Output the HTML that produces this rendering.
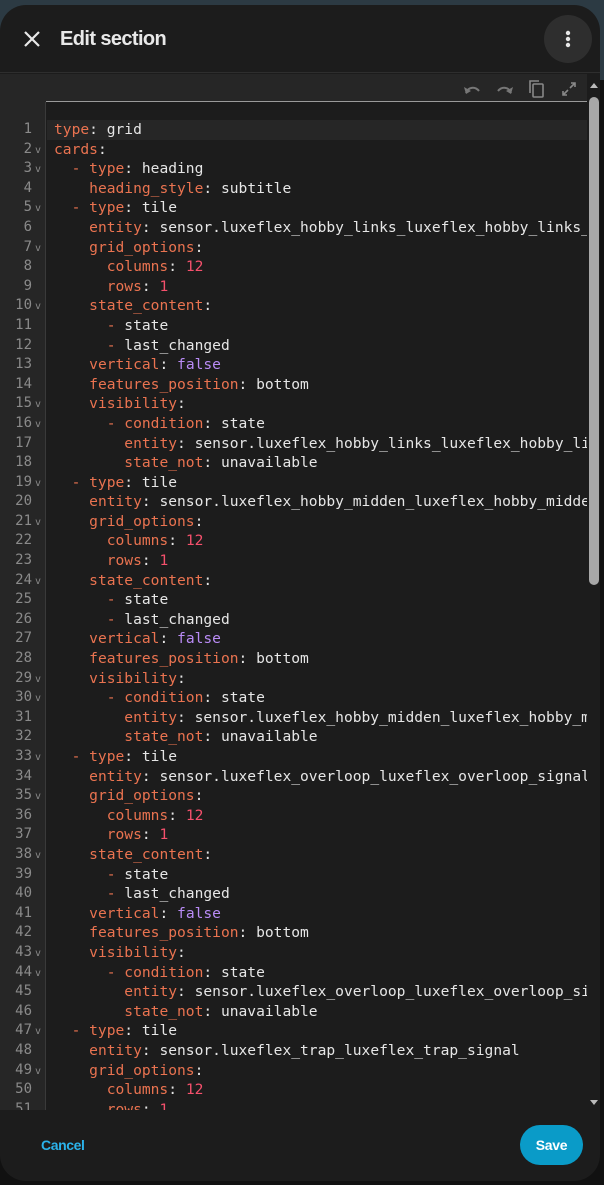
<!DOCTYPE html>
<html><head><meta charset="utf-8"><style>
*{margin:0;padding:0;box-sizing:border-box}
body{width:604px;height:1185px;background:#111;position:relative;overflow:hidden;font-family:"Liberation Sans",sans-serif}
.bgtop{position:absolute;left:0;top:0;width:604px;height:80px;background:#2c3a43}
.dlg{position:absolute;left:0;top:5px;width:600px;height:1176px;background:#1c1c1c;border-radius:26px;overflow:hidden}
.hdr{position:absolute;left:0;top:0;width:600px;height:68px;border-bottom:1px solid #2e2e2e}
.title{position:absolute;left:60px;top:23px;color:#e8e8e8;font-size:20px;font-weight:bold;letter-spacing:-0.6px}
.menu{position:absolute;left:544px;top:10px;width:48px;height:48px;border-radius:50%;background:#2e2e2e}
.ed{position:absolute;left:0;top:69px;width:600px;height:1036px;background:#1c1c1c}
.tb{position:absolute;left:0;top:0;width:587px;height:28px;background:#262626}
.gut{position:absolute;left:0;top:28px;width:46px;height:1008px;background:#262626;border-right:1px solid #3a3a3a}
.topline{position:absolute;left:46px;top:27px;width:541px;height:1px;background:#9a9a9a}
.act{position:absolute;left:47px;top:46px;width:540px;height:20px;background:#262626}
.code{position:absolute;left:0;top:46px;width:587px;height:990px;overflow:hidden;font-family:"DejaVu Sans Mono",monospace;font-size:14.6px}
.l{height:19.6px;line-height:19.6px;white-space:pre;position:relative}
.n{position:absolute;left:0;width:32px;text-align:right;color:#8a8a8a;font-size:14px}
.f{position:absolute;left:35px;top:1px;color:#888;font-size:10px}
.t{position:absolute;left:54px;color:#e6e6e6}
.k{color:#ea7350}.v{color:#e6e6e6}.num{color:#f5506c}.b{color:#b98bf5}
.sb{position:absolute;left:588px;top:0;width:12px;height:1036px;background:#1c1c1c}
.thumb{position:absolute;left:1px;top:23px;width:10px;height:488px;background:#a8a8a8;border-radius:5px}
.cancel{position:absolute;left:41px;top:1137px;color:#2bb2ea;font-size:14px;font-weight:bold;letter-spacing:-0.4px}
.save{position:absolute;left:520px;top:1125px;width:63px;height:40px;background:#0a9bc8;border-radius:20px;color:#fff;font-size:14px;font-weight:bold;letter-spacing:-0.3px;text-align:center;line-height:40px}
</style></head><body>
<div class="bgtop"></div>
<div class="dlg">
 <div class="hdr">
  <svg style="position:absolute;left:22px;top:24px" width="20" height="20" viewBox="0 0 20 20"><path d="M3 3L17 17M17 3L3 17" stroke="#e8e8e8" stroke-width="2.2"/></svg>
  <div class="title">Edit section</div>
  <div class="menu"><svg width="48" height="48" viewBox="0 0 48 48"><circle cx="24" cy="18" r="2.2" fill="#e8e8e8"/><circle cx="24" cy="24" r="2.2" fill="#e8e8e8"/><circle cx="24" cy="30" r="2.2" fill="#e8e8e8"/></svg></div>
 </div>
 <div class="ed">
  <div class="tb">
   <svg style="position:absolute;left:463px;top:9px" width="18" height="12" viewBox="0 0 18 12"><path d="M3 10C5 4 12 3 16 8" stroke="#777" stroke-width="2" fill="none"/><path d="M1 4L3 11L8 8Z" fill="#777"/></svg>
   <svg style="position:absolute;left:496px;top:9px" width="18" height="12" viewBox="0 0 18 12"><path d="M15 10C13 4 6 3 2 8" stroke="#777" stroke-width="2" fill="none"/><path d="M17 4L15 11L10 8Z" fill="#777"/></svg>
   <svg style="position:absolute;left:528px;top:5px" width="18" height="20" viewBox="0 0 18 20"><path d="M2 14V2H11" stroke="#888" stroke-width="1.6" fill="none"/><rect x="5" y="5" width="10" height="13" rx="1" stroke="#888" stroke-width="1.6" fill="none"/></svg>
   <svg style="position:absolute;left:561px;top:7px" width="16" height="16" viewBox="0 0 16 16"><path d="M9 7L14 2M10 2H14V6M7 9L2 14M2 10V14H6" stroke="#888" stroke-width="1.6" fill="none"/></svg>
  </div>
  <div class="gut"></div>
  <div class="topline"></div>
  <div class="act"></div>
  <div class="code" id="c">
<div class="l"><span class="n">1</span><span class="t"><span class="k">type</span>: grid</span></div>
<div class="l"><span class="n">2</span><span class="f">v</span><span class="t"><span class="k">cards</span>:</span></div>
<div class="l"><span class="n">3</span><span class="f">v</span><span class="t">  <span class="k">- type</span>: heading</span></div>
<div class="l"><span class="n">4</span><span class="t">    <span class="k">heading_style</span>: subtitle</span></div>
<div class="l"><span class="n">5</span><span class="f">v</span><span class="t">  <span class="k">- type</span>: tile</span></div>
<div class="l"><span class="n">6</span><span class="t">    <span class="k">entity</span>: sensor.luxeflex_hobby_links_luxeflex_hobby_links_signal</span></div>
<div class="l"><span class="n">7</span><span class="f">v</span><span class="t">    <span class="k">grid_options</span>:</span></div>
<div class="l"><span class="n">8</span><span class="t">      <span class="k">columns</span>: <span class="num">12</span></span></div>
<div class="l"><span class="n">9</span><span class="t">      <span class="k">rows</span>: <span class="num">1</span></span></div>
<div class="l"><span class="n">10</span><span class="f">v</span><span class="t">    <span class="k">state_content</span>:</span></div>
<div class="l"><span class="n">11</span><span class="t">      <span class="k">-</span> state</span></div>
<div class="l"><span class="n">12</span><span class="t">      <span class="k">-</span> last_changed</span></div>
<div class="l"><span class="n">13</span><span class="t">    <span class="k">vertical</span>: <span class="b">false</span></span></div>
<div class="l"><span class="n">14</span><span class="t">    <span class="k">features_position</span>: bottom</span></div>
<div class="l"><span class="n">15</span><span class="f">v</span><span class="t">    <span class="k">visibility</span>:</span></div>
<div class="l"><span class="n">16</span><span class="f">v</span><span class="t">      <span class="k">- condition</span>: state</span></div>
<div class="l"><span class="n">17</span><span class="t">        <span class="k">entity</span>: sensor.luxeflex_hobby_links_luxeflex_hobby_links_signal</span></div>
<div class="l"><span class="n">18</span><span class="t">        <span class="k">state_not</span>: unavailable</span></div>
<div class="l"><span class="n">19</span><span class="f">v</span><span class="t">  <span class="k">- type</span>: tile</span></div>
<div class="l"><span class="n">20</span><span class="t">    <span class="k">entity</span>: sensor.luxeflex_hobby_midden_luxeflex_hobby_midden_signal</span></div>
<div class="l"><span class="n">21</span><span class="f">v</span><span class="t">    <span class="k">grid_options</span>:</span></div>
<div class="l"><span class="n">22</span><span class="t">      <span class="k">columns</span>: <span class="num">12</span></span></div>
<div class="l"><span class="n">23</span><span class="t">      <span class="k">rows</span>: <span class="num">1</span></span></div>
<div class="l"><span class="n">24</span><span class="f">v</span><span class="t">    <span class="k">state_content</span>:</span></div>
<div class="l"><span class="n">25</span><span class="t">      <span class="k">-</span> state</span></div>
<div class="l"><span class="n">26</span><span class="t">      <span class="k">-</span> last_changed</span></div>
<div class="l"><span class="n">27</span><span class="t">    <span class="k">vertical</span>: <span class="b">false</span></span></div>
<div class="l"><span class="n">28</span><span class="t">    <span class="k">features_position</span>: bottom</span></div>
<div class="l"><span class="n">29</span><span class="f">v</span><span class="t">    <span class="k">visibility</span>:</span></div>
<div class="l"><span class="n">30</span><span class="f">v</span><span class="t">      <span class="k">- condition</span>: state</span></div>
<div class="l"><span class="n">31</span><span class="t">        <span class="k">entity</span>: sensor.luxeflex_hobby_midden_luxeflex_hobby_midden_signal</span></div>
<div class="l"><span class="n">32</span><span class="t">        <span class="k">state_not</span>: unavailable</span></div>
<div class="l"><span class="n">33</span><span class="f">v</span><span class="t">  <span class="k">- type</span>: tile</span></div>
<div class="l"><span class="n">34</span><span class="t">    <span class="k">entity</span>: sensor.luxeflex_overloop_luxeflex_overloop_signal</span></div>
<div class="l"><span class="n">35</span><span class="f">v</span><span class="t">    <span class="k">grid_options</span>:</span></div>
<div class="l"><span class="n">36</span><span class="t">      <span class="k">columns</span>: <span class="num">12</span></span></div>
<div class="l"><span class="n">37</span><span class="t">      <span class="k">rows</span>: <span class="num">1</span></span></div>
<div class="l"><span class="n">38</span><span class="f">v</span><span class="t">    <span class="k">state_content</span>:</span></div>
<div class="l"><span class="n">39</span><span class="t">      <span class="k">-</span> state</span></div>
<div class="l"><span class="n">40</span><span class="t">      <span class="k">-</span> last_changed</span></div>
<div class="l"><span class="n">41</span><span class="t">    <span class="k">vertical</span>: <span class="b">false</span></span></div>
<div class="l"><span class="n">42</span><span class="t">    <span class="k">features_position</span>: bottom</span></div>
<div class="l"><span class="n">43</span><span class="f">v</span><span class="t">    <span class="k">visibility</span>:</span></div>
<div class="l"><span class="n">44</span><span class="f">v</span><span class="t">      <span class="k">- condition</span>: state</span></div>
<div class="l"><span class="n">45</span><span class="t">        <span class="k">entity</span>: sensor.luxeflex_overloop_luxeflex_overloop_signal</span></div>
<div class="l"><span class="n">46</span><span class="t">        <span class="k">state_not</span>: unavailable</span></div>
<div class="l"><span class="n">47</span><span class="f">v</span><span class="t">  <span class="k">- type</span>: tile</span></div>
<div class="l"><span class="n">48</span><span class="t">    <span class="k">entity</span>: sensor.luxeflex_trap_luxeflex_trap_signal</span></div>
<div class="l"><span class="n">49</span><span class="f">v</span><span class="t">    <span class="k">grid_options</span>:</span></div>
<div class="l"><span class="n">50</span><span class="t">      <span class="k">columns</span>: <span class="num">12</span></span></div>
<div class="l"><span class="n">51</span><span class="t">      <span class="k">rows</span>: <span class="num">1</span></span></div>
  </div>
  <div class="sb">
   <svg style="position:absolute;left:1px;top:8px" width="10" height="8" viewBox="0 0 10 8"><path d="M1 6L5 1L9 6Z" fill="#bbb"/></svg>
   <div class="thumb"></div>
   <svg style="position:absolute;left:1px;top:1024px" width="10" height="8" viewBox="0 0 10 8"><path d="M1 2L5 7L9 2Z" fill="#bbb"/></svg>
  </div>
 </div>
</div>
<div class="cancel">Cancel</div>
<div class="save">Save</div>
</body></html>
